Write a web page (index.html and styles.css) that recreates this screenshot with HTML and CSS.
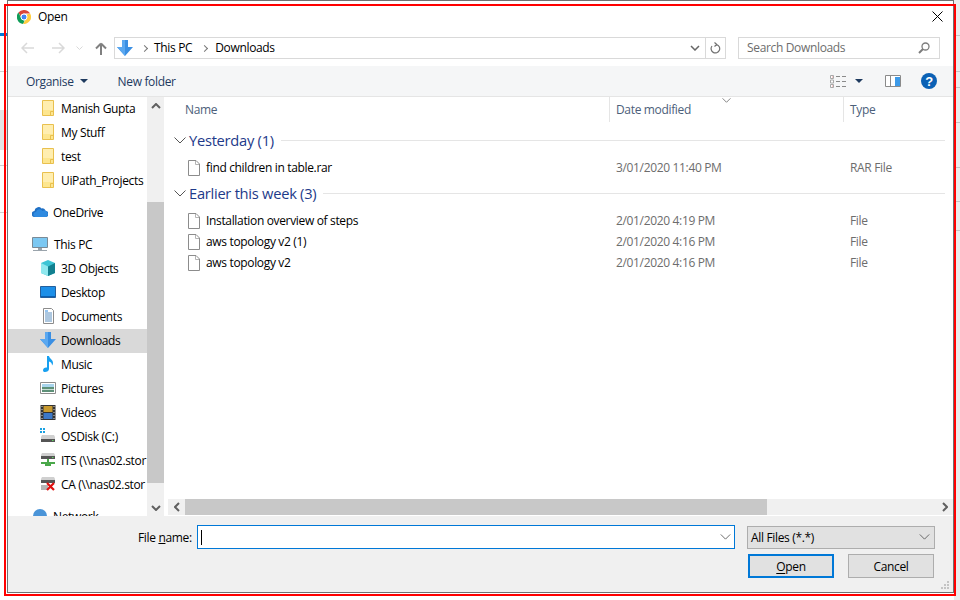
FILE: index.html
```html
<!DOCTYPE html>
<html lang="en">

<head>
    <meta charset="UTF-8">
    <title>Open</title>
    <link rel="stylesheet" href="styles.css">
</head>

<body>
    <svg class="defs" width="0" height="0">
        <symbol id="folder" viewBox="0 0 12 16">
            <path d="M.5.5h11v15H.5z" fill="#fde68f" stroke="#e9c04e"/>
            <path d="M1 1h10v9H1z" fill="#ffeeb0"/>
            <path d="M8.5 15.5v-4h3" fill="none" stroke="#e9c04e"/>
        </symbol>
        <symbol id="file" viewBox="0 0 12 16">
            <path d="M.5.5h7.5l3.5 3.5v11.500H.5z" fill="#fff" stroke="#8c8c8c"/>
            <path d="M7.500 1v3.500h3.500" fill="none" stroke="#b5b5b5"/>
        </symbol>
        <symbol id="chev" viewBox="0 0 12 7">
            <path d="M.5.5 6 6l5.500-5.500" fill="none" stroke="#555"/>
        </symbol>
        <symbol id="dl" viewBox="0 0 16 16">
            <path d="M5 0h6v7h5l-8 9-8-9h5z" fill="#3a8fe3"/>
            <path d="M5 0h3v16l-8-9h5z" fill="#5ba8f0"/>
        </symbol>
    </svg>

    <div class="window">
        <div class="titlebar">
            <svg class="chrome" width="14" height="14" viewBox="0 0 14 14">
                <path d="M7 0a7 7 0 0 1 6.100 3.500H7a3.500 3.500 0 0 0-3.400 2.700L1.400 2.600A7 7 0 0 1 7 0z" fill="#db4437"/>
                <path d="M1.400 2.600l3.100 5.900a3.500 3.500 0 0 0 3.300 2l-1.700 3.400A7 7 0 0 1 1.400 2.600z" fill="#0f9d58"/>
                <path d="M13.100 3.500A7 7 0 0 1 6.100 13.900l3.100-5.200A3.500 3.500 0 0 0 9.500 4.500z" fill="#ffcd40"/>
                <circle cx="7" cy="7" r="3" fill="#4285f4" stroke="#fff"/>
            </svg>
            <span class="title">Open</span>
            <svg class="close" width="11" height="11" viewBox="0 0 11 11">
                <path d="M.5.500l10 10M10.500.500l-10 10" stroke="#000" fill="none"/>
            </svg>
        </div>

        <div class="nav">
            <svg class="nav-btn" width="14" height="12" viewBox="0 0 14 12"><path d="M6 1 1 6l5 5M1 6h12" fill="none" stroke="#d9d9d9" stroke-width="1.500"/></svg>
            <svg class="nav-btn fwd" width="14" height="12" viewBox="0 0 14 12"><path d="M8 1l5 5-5 5M13 6H1" fill="none" stroke="#d9d9d9" stroke-width="1.500"/></svg>
            <svg class="nav-drop" width="7" height="4" viewBox="0 0 7 4"><path d="M.5.500l3 3 3-3" fill="none" stroke="#d9d9d9"/></svg>
            <svg class="nav-up" width="12" height="13" viewBox="0 0 12 13"><path d="M6 1.500 1 6.500M6 1.500l5 5M6 1.500V13" fill="none" stroke="#808080" stroke-width="2"/></svg>
            <div class="address">
                <svg class="addr-icon" width="16" height="16"><use href="#dl"/></svg>
                <span class="crumb-sep"></span>
                <span class="crumb">This PC</span>
                <span class="crumb-sep next"></span>
                <span class="crumb">Downloads</span>
                <svg class="addr-drop" width="10" height="6" viewBox="0 0 10 6"><path d="M1 1l4 4 4-4" fill="none" stroke="#666" stroke-width="1.500"/></svg>
                <div class="refresh">
                    <svg width="11" height="12" viewBox="0 0 11 12"><path d="M6.500 2.500A4.300 4.300 0 1 1 2 4M4.500.500l2.300 2-2.300 2" fill="none" stroke="#707070" stroke-width="1.200"/></svg>
                </div>
            </div>
            <div class="search">
                <span class="search-text">Search Downloads</span>
                <svg width="12" height="12" viewBox="0 0 12 12"><circle cx="7.500" cy="4.500" r="3.500" fill="none" stroke="#7c7c7c" stroke-width="1.300"/><path d="M5 7 1 11" stroke="#7c7c7c" stroke-width="2"/></svg>
            </div>
        </div>

        <div class="toolbar">
            <span class="tool organise">Organise</span>
            <span class="caret"></span>
            <span class="tool new-folder">New folder</span>
            <div class="tool-right">
                <svg class="views" width="17" height="13" viewBox="0 0 17 13">
                    <path d="M.500.500h3v3h-3zM.500 5h3v3h-3zM.500 9.500h3v3h-3z" fill="#fff" stroke="#a8a8a8"/>
                    <path d="M2 2h.500M2 11h.500" stroke="#d33"/>
                    <path d="M6 1.500h4M12 1.500h4M6 6.500h4M12 6.500h4M6 11.500h4M12 11.500h4" stroke="#8a8a8a"/>
                </svg>
                <span class="caret views-caret"></span>
                <svg class="preview" width="16" height="12" viewBox="0 0 16 12">
                    <path d="M.500.500h15v11H.500z" fill="#fff" stroke="#8a8a8a"/>
                    <path d="M5.500 0v12" stroke="#8a8a8a"/>
                    <path d="M10 2h5v9h-5z" fill="#3d9ae8"/>
                </svg>
                <svg class="help" width="16" height="16" viewBox="0 0 16 16">
                    <circle cx="8" cy="8" r="8" fill="#0b61b5"/>
                    <text x="8" y="12.500" text-anchor="middle" class="help-mark">?</text>
                </svg>
            </div>
        </div>

        <div class="content">
            <div class="sidebar">
                <ul class="tree">
                    <li class="row l2"><svg class="ico" width="12" height="16"><use href="#folder"/></svg>Manish Gupta</li>
                    <li class="row l2"><svg class="ico" width="12" height="16"><use href="#folder"/></svg>My Stuff</li>
                    <li class="row l2"><svg class="ico" width="12" height="16"><use href="#folder"/></svg>test</li>
                    <li class="row l2"><svg class="ico" width="12" height="16"><use href="#folder"/></svg>UiPath_Projects</li>
                    <li class="row l1 gap">
                        <svg class="ico" width="16" height="16" viewBox="0 0 16 16"><path d="M3 13a3 3 0 0 1-.500-6 4 4 0 0 1 7-2.500 3 3 0 0 1 4 2.500 3 3 0 0 1 0 6z" fill="#1f6fc4"/><path d="M3 13a2.600 2.600 0 0 1 1-5 3.500 3.500 0 0 1 6.500-1 3 3 0 0 1 3.500 6z" fill="#2e8ae0"/></svg>OneDrive
                    </li>
                    <li class="row l1 gap">
                        <svg class="ico" width="17" height="16" viewBox="0 0 17 16"><path d="M.500 1.500h15v10H.500z" fill="#7cc8f2" stroke="#7a8a96"/><path d="M6 12h4v2H6zM1 14h14v1H1z" fill="#9aa4ac"/></svg>This PC
                    </li>
                    <li class="row l2">
                        <svg class="ico" width="16" height="16" viewBox="0 0 16 16"><path d="M8 0l7 3v10l-7 3-7-3V3z" fill="#3cc4d4"/><path d="M8 6.500l7-3.500v10l-7 3z" fill="#12808f"/><path d="M1 3l7 3.500V16l-7-3z" fill="#8fe8ee"/></svg>3D Objects
                    </li>
                    <li class="row l2">
                        <svg class="ico" width="16" height="16" viewBox="0 0 16 16"><path d="M.500 2.500h15v11H.500z" fill="#1c8fe8" stroke="#245f9c"/><path d="M1 12h14v1H1z" fill="#0b5fb0"/></svg>Desktop
                    </li>
                    <li class="row l2">
                        <svg class="ico" width="16" height="16" viewBox="0 0 16 16"><path d="M3.500.500h8l2 2v13h-10z" fill="#fff" stroke="#8c8c8c"/><path d="M5 5h7M5 7h7M5 9h7M5 11h7M5 13h7" stroke="#5a8fc0"/><path d="M5 3h3" stroke="#2e8ae0"/></svg>Documents
                    </li>
                    <li class="row l2 selected"><svg class="ico" width="16" height="16"><use href="#dl"/></svg>Downloads</li>
                    <li class="row l2">
                        <svg class="ico" width="16" height="16" viewBox="0 0 16 16"><path d="M7 0h2c.500 3 4 3.500 4 7 0 1-.500 2-1 2.500.300-2.500-1.500-3.500-3-4V13c0 2-2 3-4 3-1.500 0-2-1-2-1.800C3 12.500 5 11 7 11.500z" fill="#18a0f0"/></svg>Music
                    </li>
                    <li class="row l2">
                        <svg class="ico" width="16" height="16" viewBox="0 0 16 16"><path d="M.500 2.500h15v11H.500z" fill="#fff" stroke="#8c8c8c"/><path d="M2 4h12v3H2z" fill="#a8d4ec"/><path d="M2 7h12v5H2z" fill="#5d9078"/><path d="M2 9h12v1H2z" fill="#c8dcd4"/></svg>Pictures
                    </li>
                    <li class="row l2">
                        <svg class="ico" width="15" height="16" viewBox="0 0 15 16"><path d="M0 1h15v15H0z" fill="#333"/><path d="M3 2h9v6H3z" fill="#c89a30"/><path d="M3 9h9v6H3z" fill="#3c78c8"/><path d="M1 2h1v1H1zM1 5h1v1H1zM1 8h1v1H1zM1 11h1v1H1zM1 14h1v1H1zM13 2h1v1h-1zM13 5h1v1h-1zM13 8h1v1h-1zM13 11h1v1h-1zM13 14h1v1h-1z" fill="#ddd"/></svg>Videos
                    </li>
                    <li class="row l2">
                        <svg class="ico" width="16" height="16" viewBox="0 0 16 16"><path d="M0 0h2v2H0zM3 0h2v2H3zM0 3h2v2H0zM3 3h2v2H3z" fill="#1ba1e2"/><path d="M2 7h12l1 2v5H1V9z" fill="#d0d0d0"/><path d="M1 11h14v3H1z" fill="#555"/><path d="M12 12h1.500v1H12z" fill="#5fd35f"/></svg>OSDisk (C:)
                    </li>
                    <li class="row l2">
                        <svg class="ico" width="16" height="16" viewBox="0 0 16 16"><path d="M2 1h12l1 2v4H1V3z" fill="#d0d0d0"/><path d="M1 4h14v3H1z" fill="#555"/><path d="M12 5h1.500v1H12z" fill="#5fd35f"/><path d="M7 7h2v3H7zM1 10h14v2H1zM5 12h6v2H5z" fill="#4aa84a"/></svg>ITS (\\nas02.stor
                    </li>
                    <li class="row l2">
                        <svg class="ico" width="16" height="16" viewBox="0 0 16 16"><path d="M2 1h12l1 2v4H1V3z" fill="#d0d0d0"/><path d="M1 4h14v3H1z" fill="#555"/><path d="M1 9h7v5H1z" fill="#b5b5b5"/><path d="M7 7l7 7M14 7l-7 7" stroke="#e01010" stroke-width="2.200"/></svg>CA (\\nas02.stor
                    </li>
                    <li class="row l1 gap">
                        <svg class="ico" width="16" height="16" viewBox="0 0 16 16"><circle cx="8" cy="8" r="7" fill="#4a94d8"/><path d="M0 14h16v2H0z" fill="#8a8a8a"/></svg>Network
                    </li>
                </ul>
            </div>
            <div class="vscroll">
                <svg class="sb-arrow" width="10" height="6" viewBox="0 0 10 6"><path d="M1 5l4-4 4 4" fill="none" stroke="#606060" stroke-width="2"/></svg>
                <div class="vtrack"><div class="vthumb"></div></div>
                <svg class="sb-arrow" width="10" height="6" viewBox="0 0 10 6"><path d="M1 1l4 4 4-4" fill="none" stroke="#606060" stroke-width="2"/></svg>
            </div>

            <div class="pane">
                <div class="list">
                    <div class="head">
                        <div class="col-name">Name</div>
                        <div class="col-date">Date modified</div>
                        <div class="col-type">Type</div>
                        <svg class="sort" width="9" height="5"><use href="#chev"/></svg>
                    </div>

                    <div class="group first">
                        <svg width="12" height="7"><use href="#chev"/></svg>
                        <span class="group-name">Yesterday (1)</span>
                        <span class="group-line"></span>
                    </div>
                    <div class="file">
                        <div class="col-name"><svg width="12" height="16"><use href="#file"/></svg>find children in table.rar</div>
                        <div class="col-date">3/01/2020 11:40 PM</div>
                        <div class="col-type">RAR File</div>
                    </div>

                    <div class="group">
                        <svg width="12" height="7"><use href="#chev"/></svg>
                        <span class="group-name">Earlier this week (3)</span>
                        <span class="group-line"></span>
                    </div>
                    <div class="file">
                        <div class="col-name"><svg width="12" height="16"><use href="#file"/></svg>Installation overview of steps</div>
                        <div class="col-date">2/01/2020 4:19 PM</div>
                        <div class="col-type">File</div>
                    </div>
                    <div class="file">
                        <div class="col-name"><svg width="12" height="16"><use href="#file"/></svg>aws topology v2 (1)</div>
                        <div class="col-date">2/01/2020 4:16 PM</div>
                        <div class="col-type">File</div>
                    </div>
                    <div class="file">
                        <div class="col-name"><svg width="12" height="16"><use href="#file"/></svg>aws topology v2</div>
                        <div class="col-date">2/01/2020 4:16 PM</div>
                        <div class="col-type">File</div>
                    </div>
                </div>

                <div class="hscroll">
                    <div class="hs-btn"><svg width="6" height="10" viewBox="0 0 6 10"><path d="M5 1 1 5l4 4" fill="none" stroke="#606060" stroke-width="2"/></svg></div>
                    <div class="hthumb"></div>
                    <div class="hs-btn end"><svg width="6" height="10" viewBox="0 0 6 10"><path d="M1 1l4 4-4 4" fill="none" stroke="#606060" stroke-width="2"/></svg></div>
                </div>
            </div>
        </div>

        <div class="footer">
            <div class="footer-row">
                <label class="fname-label" for="fname">File <u>n</u>ame:</label>
                <div class="fname">
                    <span class="cursor"></span>
                    <svg width="11" height="6"><use href="#chev"/></svg>
                </div>
                <div class="ftype">
                    <span>All Files (*.*)</span>
                    <svg width="11" height="6"><use href="#chev"/></svg>
                </div>
            </div>
            <div class="footer-row buttons">
                <div class="btn primary"><u>O</u>pen</div>
                <div class="btn">Cancel</div>
            </div>
            <svg class="grip" width="9" height="9" viewBox="0 0 9 9"><path d="M6 0h2v2H6zM3 3h2v2H3zM6 3h2v2H6zM0 6h2v2H0zM3 6h2v2H3zM6 6h2v2H6z" fill="#c4c4c4"/></svg>
        </div>
    </div>

    <div class="redbox"></div>
</body>

</html>
```

FILE: styles.css
```css
* {
    box-sizing: border-box;
}

html,
body {
    height: 100%;
}

/* bits of the page behind the dialog, left and right of it */
body {
    margin: 0;
    overflow: hidden;
    background:
        linear-gradient(#0078d7, #0078d7) 0 33px / 7px 3px no-repeat,
        linear-gradient(#e4e4e4, #e4e4e4) 0 110px / 7px 40px no-repeat,
        linear-gradient(#d0d0d0, #d0d0d0) 0 71px / 7px 1px no-repeat,
        linear-gradient(#d0d0d0, #d0d0d0) 0 165px / 7px 1px no-repeat,
        linear-gradient(#d0d0d0, #d0d0d0) 0 212px / 7px 1px no-repeat,
        linear-gradient(#c4c4c4, #c4c4c4) 954px 35px / 6px 1px no-repeat,
        linear-gradient(#c4c4c4, #c4c4c4) 954px 71px / 6px 1px no-repeat,
        linear-gradient(#c4c4c4, #c4c4c4) 954px 87px / 6px 1px no-repeat,
        linear-gradient(#c4c4c4, #c4c4c4) 954px 122px / 6px 1px no-repeat,
        linear-gradient(#c4c4c4, #c4c4c4) 954px 167px / 6px 1px no-repeat,
        linear-gradient(#c4c4c4, #c4c4c4) 954px 201px / 6px 1px no-repeat,
        linear-gradient(#c4c4c4, #c4c4c4) 954px 230px / 6px 1px no-repeat,
        linear-gradient(#ececec, #ececec) 954px 0 / 6px 100% no-repeat,
        #fff;
    font-family: 'Open Sans', 'Noto Sans', sans-serif;
    font-size: 12px;
    letter-spacing: -0.34px;
    color: #000;
}

.defs {
    position: absolute;
}

svg {
    display: block;
    flex: none;
}

/* window */
.window {
    margin-left: 7px;
    width: 947px;
    height: 593px;
    background: #fff;
    border: 1px solid #707070;
    display: flex;
    flex-direction: column;
}

.redbox {
    position: absolute;
    left: 4px;
    top: 4px;
    width: 952px;
    height: 592px;
    border: 2px solid #f00;
}

.titlebar {
    height: 31px;
    flex: none;
    display: flex;
    align-items: center;
    padding: 0 10px 0 9px;
}

.title {
    margin-left: 7px;
}

.close {
    margin-left: auto;
}

/* nav row */
.nav {
    height: 34px;
    flex: none;
    display: flex;
    align-items: center;
    padding-bottom: 2px;
}

.nav-btn {
    margin-left: 13px;
}

.nav-btn.fwd {
    margin-left: 16px;
}

.nav-drop {
    margin-left: 11px;
}

.nav-up {
    margin-left: 12px;
}

.address {
    margin-left: 7px;
    width: 612px;
    height: 22px;
    border: 1px solid #d9d9d9;
    display: flex;
    align-items: center;
    padding-left: 2px;
}

.crumb {
    margin-bottom: 2px;
}

.crumb-sep {
    width: 5px;
    height: 5px;
    margin: 0 7px 0 9px;
    border-top: 1px solid #777;
    border-right: 1px solid #777;
    transform: rotate(45deg);
}

.crumb-sep.next {
    margin-left: 10px;
    margin-right: 8px;
}

.addr-drop {
    margin-left: auto;
    margin-right: 5px;
}

.refresh {
    width: 20px;
    height: 20px;
    border-left: 1px solid #d9d9d9;
    display: flex;
    align-items: center;
    justify-content: center;
}

.search {
    margin-left: 12px;
    width: 202px;
    height: 22px;
    border: 1px solid #d9d9d9;
    display: flex;
    align-items: center;
    justify-content: space-between;
    padding: 0 9px 0 8px;
}

.search-text {
    margin-bottom: 2px;
    color: #6d6d6d;
}

/* toolbar */
.toolbar {
    height: 31px;
    flex: none;
    background: #f5f6f7;
    border-bottom: 1px solid #e5e5e5;
    display: flex;
    align-items: center;
    color: #1e3a5f;
}

.organise {
    margin-left: 18px;
}

.caret {
    width: 0;
    height: 0;
    margin-left: 6px;
    border-left: 4px solid transparent;
    border-right: 4px solid transparent;
    border-top: 4px solid #1e3a5f;
}

.new-folder {
    margin-left: 30px;
}

.tool-right {
    margin-left: auto;
    display: flex;
    align-items: center;
    padding-right: 16px;
}

.views-caret {
    margin-left: 8px;
}

.preview {
    margin-left: 22px;
}

.help {
    margin-left: 20px;
}

.help-mark {
    font-family: 'Liberation Sans', sans-serif;
    font-size: 13px;
    font-weight: 700;
    fill: #fff;
}

/* sidebar */
.content {
    flex: 1;
    min-height: 0;
    display: flex;
}

.sidebar {
    width: 139px;
    flex: none;
    overflow: hidden;
}

.tree {
    list-style: none;
    margin: 0;
    padding: 0;
}

.row {
    height: 24px;
    display: flex;
    align-items: center;
    padding-bottom: 2px;
    white-space: nowrap;
    overflow: hidden;
}

.row.gap {
    margin-top: 8px;
}

.row.l1 {
    padding-left: 24px;
}

.row.l2 {
    padding-left: 32px;
}

.row.l1 .ico {
    margin-right: 5px;
}

.row.l2 .ico {
    width: 16px;
    margin-right: 5px;
}

.row.selected {
    background: #d9d9d9;
}

.vscroll {
    width: 17px;
    flex: none;
    background: #f0f0f0;
    display: flex;
    flex-direction: column;
    align-items: center;
}

.sb-arrow {
    margin: 6px 0 5px;
}

.vtrack {
    flex: 1;
    width: 100%;
    padding-top: 88px;
    display: flex;
}

.vthumb {
    width: 100%;
    height: 281px;
    background: #c8c8c8;
}

/* file list */
.pane {
    flex: 1;
    min-width: 0;
    display: flex;
    flex-direction: column;
    margin-left: 2px;
}

.list {
    flex: 1;
    min-height: 0;
    position: relative;
}

.head,
.file {
    display: grid;
    grid-template-columns: 443px 234px 1fr;
}

.head {
    height: 25px;
    color: #4c607a;
    align-items: stretch;
}

.head > div {
    display: flex;
    align-items: center;
}

.head .col-name {
    padding-left: 19px;
}

.head .col-date,
.head .col-type {
    padding-left: 6px;
    border-left: 1px solid #e5e5e5;
}

.sort {
    position: absolute;
    left: 556px;
    top: 1px;
}

.group {
    height: 21px;
    margin-top: 5px;
    margin-bottom: 6px;
    padding-left: 8px;
    padding-right: 8px;
    display: flex;
    align-items: center;
    color: #1e3a8a;
    font-size: 14.700px;
    letter-spacing: -0.27px;
}

.group.first {
    margin-top: 8px;
}

.group-name {
    margin-left: 3px;
    margin-bottom: 2px;
}

.group-line {
    flex: 1;
    height: 1px;
    margin-left: 7px;
    background: #e5e5e5;
}

.file {
    height: 21px;
    align-items: center;
    color: #6d6d6d;
}

.file .col-name {
    color: #000;
    padding-left: 22px;
    display: flex;
    align-items: center;
    gap: 6px;
}

.file .col-date,
.file .col-type {
    padding-left: 7px;
}

.hscroll {
    height: 16px;
    flex: none;
    margin-left: 2px;
    margin-bottom: 1px;
    background: #f0f0f0;
    display: flex;
}

.hs-btn {
    width: 17px;
    display: flex;
    align-items: center;
    justify-content: center;
}

.hs-btn.end {
    margin-left: auto;
}

.hthumb {
    width: 582px;
    background: #c8c8c8;
}

/* footer */
.footer {
    height: 76px;
    flex: none;
    background: #f0f0f0;
    padding-top: 9px;
    position: relative;
}

.footer-row {
    display: flex;
    align-items: center;
}

.fname-label {
    margin-left: 130px;
    width: 59px;
}

.fname {
    width: 538px;
    height: 24px;
    background: #fff;
    border: 1px solid #0078d7;
    display: flex;
    align-items: center;
    justify-content: space-between;
    padding: 0 3px 0 3px;
}

.cursor {
    width: 1px;
    height: 15px;
    background: #000;
}

.ftype {
    margin-left: 12px;
    width: 188px;
    height: 23px;
    background: #e1e1e1;
    border: 1px solid #adadad;
    display: flex;
    align-items: center;
    justify-content: space-between;
    padding: 0 4px 0 3px;
}

.buttons {
    justify-content: flex-end;
    gap: 14px;
    margin-top: 5px;
    padding-right: 19px;
}

.btn {
    width: 86px;
    height: 24px;
    background: #e1e1e1;
    border: 1px solid #adadad;
    display: flex;
    align-items: center;
    justify-content: center;
}

.btn.primary {
    border: 2px solid #0078d7;
}

.btn u {
    text-underline-offset: 2px;
}

.grip {
    position: absolute;
    right: 3px;
    bottom: 2px;
}
```
